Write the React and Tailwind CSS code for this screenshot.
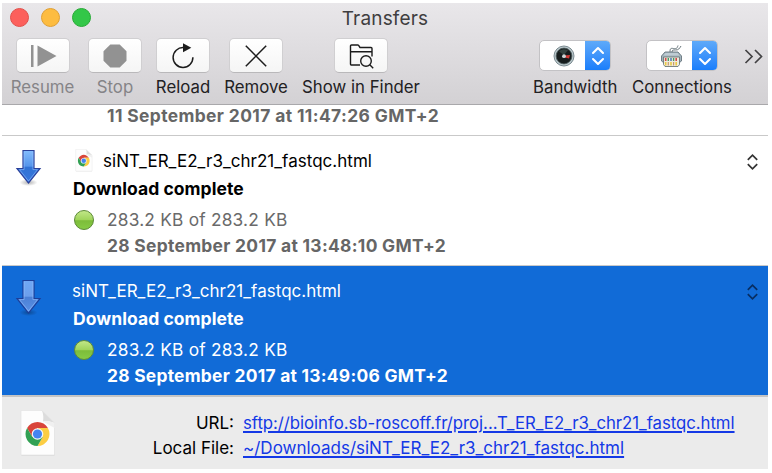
function ToolButton({ label, width, dim, children }) {
  return (
    <div className={`flex shrink-0 flex-col items-center ${width} ${dim ? "text-[#858487]" : "text-[#222123]"}`}>
      <div className="flex h-[35px] w-[54px] items-center justify-center rounded-[5px] border border-[#d0cfd1] border-b-[#b9b8ba] bg-gradient-to-b from-white to-[#f5f5f5]">
        {children}
      </div>
      <span className="mt-[3px] text-[16.8px] leading-[22px] whitespace-nowrap">{label}</span>
    </div>
  );
}

function ToolSelect({ label, width, children }) {
  return (
    <div className={`flex shrink-0 flex-col items-start text-[#222123] ${width}`}>
      <div className="mt-[2px] flex h-[31px] w-[72px] self-center overflow-hidden rounded-[5px] border border-[#c3c2c5] bg-white">
        <div className="flex flex-1 items-center justify-center pl-[4px]">{children}</div>
        <div className="-my-px -mr-px flex w-[26px] items-center justify-center bg-gradient-to-b from-[#60abf9] to-[#157cfb]">
          <svg width="14" height="20" viewBox="0 0 14 20" fill="none" stroke="white" strokeWidth="2.1" strokeLinecap="round" strokeLinejoin="round">
            <path d="M2 7 7 2l5 5M2 13l5 5 5-5" />
          </svg>
        </div>
      </div>
      <span className="mt-[5px] ml-[1px] text-[16.8px] leading-[22px] whitespace-nowrap">{label}</span>
    </div>
  );
}

function ChromeDoc({ width, height }) {
  return (
    <svg className="shrink-0" width={width} height={height} viewBox="0 0 36 47">
      <path d="M1.5 1.5h20L34.5 14v31.5h-33z" fill="#c9c9c9" opacity=".7" />
      <path d="M1 .5h21L34.5 13v32H1z" fill="#fdfdfd" stroke="#e0e0e0" strokeWidth=".6" />
      <path d="M22 .5c1.5 4 1.5 7.500 1 11 4-.6 8-.2 11.500 1.500z" fill="#dcdcdc" />
      <path d="M23 11.500c4-.6 8-.2 11.500 1.500v5z" fill="#f0f0f0" />
      <g transform="translate(17.500 24)">
        <path d="M-10.390-6A12 12 0 0 1 10.390-6L0-6 -5.200 3z" fill="#d9453a" />
        <path d="M10.390-6A12 12 0 0 1 0 12L5.200 3 0-6z" fill="#fccd43" />
        <path d="M0 12A12 12 0 0 1 -10.390-6L-5.200 3 5.200 3z" fill="#31a053" />
        <circle r="5.800" fill="#f5f5f5" />
        <circle r="4.600" fill="#4584f0" />
      </g>
    </svg>
  );
}

function DownArrow({ selected }) {
  return (
    <svg width="28" height="38" viewBox="0 0 28 38">
      <defs>
        <linearGradient id={selected ? "arrowSel" : "arrow"} x1="0" y1="0" x2="0" y2="1">
          <stop offset="0" stopColor={selected ? "#70a8f5" : "#83bdfd"} />
          <stop offset=".48" stopColor={selected ? "#6c9fec" : "#5695eb"} />
          <stop offset=".52" stopColor={selected ? "#4b80d6" : "#3273d5"} />
          <stop offset="1" stopColor={selected ? "#5b92e6" : "#3676dc"} />
        </linearGradient>
        <radialGradient id={selected ? "shadeSel" : "shade"}>
          <stop offset="0" stopColor="#000" stopOpacity=".3" />
          <stop offset="1" stopColor="#000" stopOpacity="0" />
        </radialGradient>
      </defs>
      <ellipse cx="14.500" cy="33.500" rx="9" ry="3.500" fill={selected ? "url(#shadeSel)" : "url(#shade)"} />
      <path d="M9 1.500h11v18h6L14.500 34 3 19.500h6z" fill={selected ? "url(#arrowSel)" : "url(#arrow)"} stroke={selected ? "#1d3e98" : "#293f99"} strokeWidth="1.200" />
      <path d="M10.100 2.600v18H5.500L14.500 32l9-11.400h-4.600v-18" fill="none" stroke="#9bc4ff" strokeOpacity=".6" strokeWidth=".9" />
    </svg>
  );
}

function GreenDot() {
  return (
    <svg className="shrink-0" width="22" height="22" viewBox="0 0 22 22">
      <defs>
        <linearGradient id="dot" x1="0" y1="0" x2="0" y2="1">
          <stop offset="0" stopColor="#c3e88a" />
          <stop offset=".48" stopColor="#a0d45c" />
          <stop offset=".54" stopColor="#7dbd3a" />
          <stop offset="1" stopColor="#86cb45" />
        </linearGradient>
      </defs>
      <circle cx="11" cy="11" r="9.500" fill="url(#dot)" stroke="#5d8a39" strokeWidth="1" />
    </svg>
  );
}

function Stepper() {
  return (
    <svg className="mt-[17px]" width="12" height="18" viewBox="0 0 12 18" fill="none" stroke="currentColor" strokeWidth="1.700">
      <path d="M1.800 6.900 6.500 2.200l4.700 4.700M1.800 11.100l4.700 4.700 4.700-4.700" />
    </svg>
  );
}

function Transfer({ selected, docIcon, date, dateSpacing }) {
  return (
    <div className={`flex h-[129px] shrink-0 pr-[10px] ${selected ? "bg-[#116bd7] text-white" : "bg-white text-black"}`}>
      <div className="w-[70px] shrink-0 pt-[13px] pl-[12px]">
        <DownArrow selected={selected} />
      </div>
      <div className="flex flex-1 flex-col pt-[12px]">
        <div className="flex h-[28px] items-center">
          {docIcon && (
            <div className="mr-[10px] -mt-[3px] ml-[3px] flex">
              <ChromeDoc width={18} height={23} />
            </div>
          )}
          <span className="text-[17px] tracking-[0.03px]">siNT_ER_E2_r3_chr21_fastqc.html</span>
        </div>
        <div className="-mt-[1px] flex h-[28px] items-center pl-[1px] text-[17.5px] font-bold tracking-[0.06px]">Download complete</div>
        <div className={`flex h-[33px] items-center gap-[12px] pl-[1px] ${selected ? "" : "text-[#6a6a6a]"}`}>
          <GreenDot />
          <span className="text-[17.3px] tracking-[0.22px]">283.2 KB of 283.2 KB</span>
        </div>
        <div className={`-mt-[1px] flex h-[22px] items-center pl-[35px] text-[17.4px] font-bold ${dateSpacing} ${selected ? "" : "text-[#666]"}`}>{date}</div>
      </div>
      <div className={selected ? "text-[#082e62]" : "text-[#333]"}>
        <Stepper />
      </div>
    </div>
  );
}

export default function App() {
  return (
    <div className="h-[473px] w-[772px] overflow-hidden bg-white px-[2px] pt-[3px] font-['Inter','Liberation_Sans',sans-serif] whitespace-nowrap">
      <div className="flex h-[466px] w-[766px] flex-col overflow-hidden">
        <header className="flex h-[102px] shrink-0 flex-col border-b border-[#a9a8ab] bg-gradient-to-b from-[#e9e7ea] to-[#d3d1d4]">
          <div className="grid h-[35px] grid-cols-[1fr_auto_1fr] items-start">
            <div className="flex gap-[12px] pt-[4.5px] pl-[7.5px]">
              <span className="size-[19px] rounded-full border border-[#e2504b] bg-[#fc605c]" />
              <span className="size-[19px] rounded-full border border-[#e0a034] bg-[#fdbc40]" />
              <span className="size-[19px] rounded-full border border-[#27aa35] bg-[#33c748]" />
            </div>
            <h1 className="pt-[2.5px] text-[19px] leading-[26px] tracking-[0.18px] text-[#3f3e40]">Transfers</h1>
          </div>
          <div className="flex gap-[14px] pl-[9px]">
            <ToolButton label="Resume" width="w-[63px]" dim>
              <svg width="28" height="24" viewBox="0 0 28 24" fill="#929292">
                <path d="M2 1h2.500v22H2zM8.500 1.500 27.500 12 8.500 22.500z" />
              </svg>
            </ToolButton>
            <ToolButton label="Stop" width="w-[54px]" dim>
              <svg width="24" height="24" viewBox="0 0 24 24" fill="#929292">
                <path d="M7.300.5h9.400l6.800 6.800v9.400l-6.800 6.800H7.300L.5 16.700V7.300z" />
              </svg>
            </ToolButton>
            <ToolButton label="Reload" width="w-[54px]">
              <svg className="-mt-[1px]" width="24" height="28" viewBox="0 0 24 28">
                <path d="M12.500 6.600A9.900 9.900 0 1 0 21.900 16.300" fill="none" stroke="#1c1c1c" strokeWidth="1.500" />
                <path d="M12 2.300 20.300 6.800 12 11.300z" fill="#1c1c1c" />
              </svg>
            </ToolButton>
            <ToolButton label="Remove" width="w-[64px]">
              <svg width="22" height="22" viewBox="0 0 22 22" stroke="#1c1c1c" strokeWidth="1.500">
                <path d="M.8.8 21.200 21.200M21.200.8.8 21.200" />
              </svg>
            </ToolButton>
            <ToolButton label="Show in Finder" width="w-[118px]">
              <svg width="25" height="26" viewBox="0 0 25 26" fill="none" stroke="#1c1c1c" strokeWidth="1.400" strokeLinejoin="round">
                <path d="M11 22H2.500a1 1 0 0 1-1-1V3a1 1 0 0 1 1-1h6.300a1 1 0 0 1 .8.400L11 4.500h11a1 1 0 0 1 1 1v8M1.500 8.700H23" />
                <circle cx="17" cy="18" r="5.300" />
                <path d="M20.800 21.800 24.200 25.200" />
              </svg>
            </ToolButton>
            <div className="ml-[98px] flex shrink-0 items-start gap-[14px]">
              <ToolSelect label="Bandwidth" width="w-[85px]">
                <svg width="22" height="22" viewBox="0 0 22 22">
                  <circle cx="11" cy="11" r="10" fill="#b9c7cb" stroke="#7d8c92" strokeWidth="1" />
                  <circle cx="11" cy="11" r="7.900" fill="#171d1e" stroke="#4b595b" strokeWidth=".8" />
                  <path d="M6 6.500A7 7 0 0 1 15 5.300L11 10z" fill="#34423f" />
                  <path d="M11 10.500 17 10l-1 3.500-4-1z" fill="#d43a35" />
                  <circle cx="11" cy="11.200" r="1.900" fill="#ced6d6" />
                </svg>
              </ToolSelect>
              <ToolSelect label="Connections" width="w-[101px]">
                <svg width="23" height="24" viewBox="0 0 23 24">
                  <path d="M10 8.500c0-4 .5-4.500 3.500-4 3 .5 3.500 0 4.500-3M12 8.500c0-2.500.8-2.700 3.500-2.500 3 .1 4-1.500 5.500-4" fill="none" stroke="#66747a" strokeWidth="1" />
                  <path d="M5 8h13l3.500 4v5l-2 1.500H3.500l-2-1.500v-5z" fill="#a3b4bd" stroke="#66757d" strokeWidth=".9" />
                  <path d="M5.500 9h12l2 2.500h-16z" fill="#bfccd3" />
                  <path d="M3.500 13h16v7.500l-1.500 2H5l-1.500-2z" fill="#efecdc" stroke="#6d7878" strokeWidth=".9" />
                  <path d="M5.700 14v3M16.200 14v3" stroke="#d24a4a" strokeWidth="1.600" />
                  <path d="M8.300 14v3M13.600 14v3" stroke="#469b65" strokeWidth="1.400" />
                  <path d="M11 14v3" stroke="#3e70b1" strokeWidth="1.400" />
                  <path d="M5.700 18v3.500M11 18v3.500M16.200 18v3.500" stroke="#ecc944" strokeWidth="1.600" />
                  <path d="M8.300 18v3.500M13.600 18v3.500" stroke="#c99a6a" strokeWidth="1.200" />
                </svg>
              </ToolSelect>
            </div>
            <svg className="mt-[11px] -ml-[2px] shrink-0" width="20" height="15" viewBox="0 0 20 15" fill="none" stroke="#434244" strokeWidth="1.700">
              <path d="M1.500 1 8 7.500 1.500 14M11 1l6.500 6.500L11 14" />
            </svg>
          </div>
        </header>

        <div className="flex h-[31px] shrink-0 items-start border-b border-[#c9c9c9] bg-white pl-[105px] text-[17.4px] leading-[22px] font-bold tracking-[0.39px] text-[#666]">
          11 September 2017 at 11:47:26 GMT+2
        </div>
        <Transfer docIcon date="28 September 2017 at 13:48:10 GMT+2" dateSpacing="tracking-[0.31px]" />
        <div className="h-px shrink-0 bg-[#c9c9c9]" />
        <Transfer selected date="28 September 2017 at 13:49:06 GMT+2" dateSpacing="tracking-[0.26px]" />

        <footer className="flex flex-1 border-t-2 border-[#c4c4c4] bg-[#ebebeb] pt-[13px] pl-[18px]">
          <ChromeDoc width={36} height={47} />
          <div className="mt-[1px] ml-[16px] grid h-[50px] grid-cols-[162px_auto] grid-rows-[25px_25px] items-center gap-x-[9px] text-[17px]">
            <span className="text-right">URL:</span>
            <a className="text-[16.8px] tracking-[-0.05px] text-[#1439e6] underline decoration-[1.5px] underline-offset-2">sftp://bioinfo.sb-roscoff.fr/proj...T_ER_E2_r3_chr21_fastqc.html</a>
            <span className="text-right">Local File:</span>
            <a className="text-[17px] text-[#1439e6] underline decoration-[1.5px] underline-offset-2">~/Downloads/siNT_ER_E2_r3_chr21_fastqc.html</a>
          </div>
        </footer>
      </div>
    </div>
  );
}
